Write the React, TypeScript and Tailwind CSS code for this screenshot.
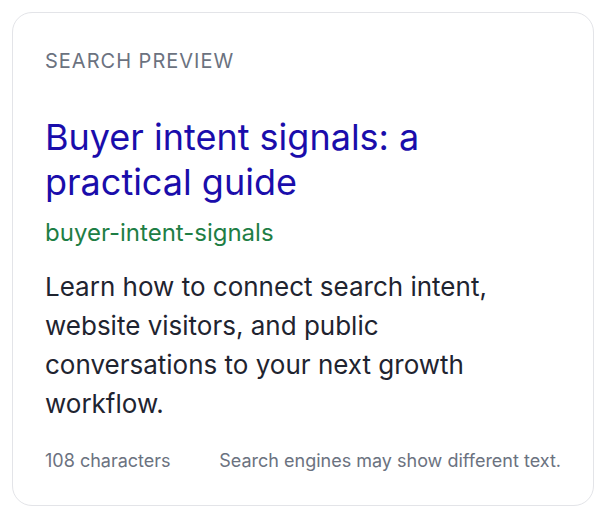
import React from 'react'

const FONT = { fontFamily: 'Inter, "Noto Sans", sans-serif' }

export default function App() {
  return (
    <div className="min-h-screen bg-white p-3" style={FONT}>
      {/* Tarjeta de vista previa */}
      <div className="rounded-[20px] border border-[#e3e4e8] bg-white px-8 pt-8 pb-8">
        <div className="text-[20px] leading-8 tracking-[0.05em] text-[#6b7280]">SEARCH PREVIEW</div>

        <h2 className="mt-[38px] text-[36px] leading-[45px] text-[#1a0dab]">
          Buyer intent signals: a practical guide
        </h2>
        <div className="mt-3 text-[24px] leading-8 text-[#1e7e45]">buyer-intent-signals</div>

        <p className="mt-[18px] max-w-[470px] text-[26px] leading-[39px] text-[#1f2430]">
          Learn how to connect search intent, website visitors, and public conversations to your next growth
          workflow.
        </p>

        <div className="mt-[26px] flex items-center justify-between text-[18px] leading-6 text-[#6b7280]">
          <span>108 characters</span>
          <span>Search engines may show different text.</span>
        </div>
      </div>
    </div>
  )
}
